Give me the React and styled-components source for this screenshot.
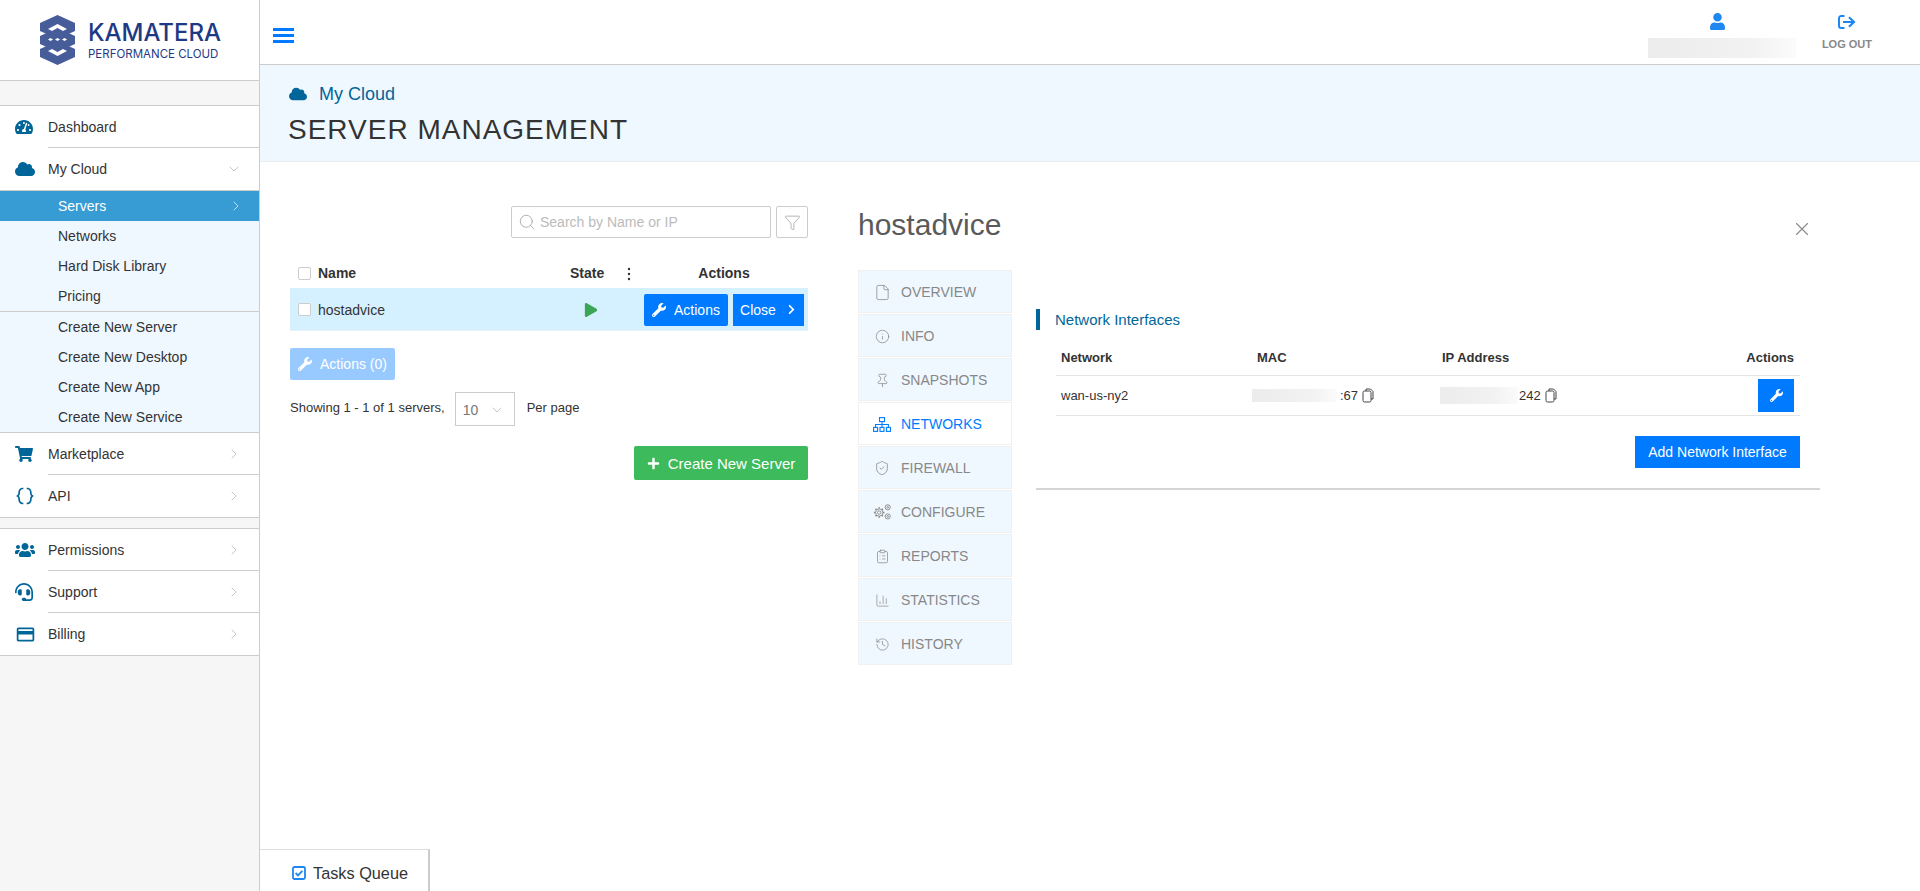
import React from 'react'
import styled, { createGlobalStyle } from 'styled-components'
import {
  FaTachometerAlt,
  FaCloud,
  FaShoppingCart,
  FaUsers,
  FaHeadset,
  FaWrench,
  FaPlay,
  FaPlus,
  FaUser,
  FaChevronRight,
} from 'react-icons/fa'
import { MdPayment } from 'react-icons/md'
import { BiCodeCurly } from 'react-icons/bi'
import {
  ChevronDown,
  ChevronRight,
  Search,
  Funnel,
  X,
  File,
  Info,
  Pin,
  ShieldCheck,
  ClipboardList,
  ChartColumn,
  History,
} from 'lucide-react'

const GlobalStyle = createGlobalStyle`
  html, body {
    margin: 0;
    height: 100%;
    overflow: hidden;
    background: #fff;
  }
  body {
    font-family: "Liberation Sans", Arial, sans-serif;
    font-size: 14px;
    color: #333;
  }
  #root { height: 100%; }
  * { box-sizing: border-box; }
`

const Page = styled.div`
  display: flex;
  height: 891px;
  position: relative;
`

const Sidebar = styled.aside`
  width: 260px;
  flex: none;
  background: #f6f6f6;
  border-right: 1px solid #ccc;
`

const LogoBox = styled.div`
  height: 81px;
  background: #fff;
  border-bottom: 1px solid #ccc;
  display: flex;
  align-items: center;
  gap: 13px;
  padding: 0 0 1px 40px;
`

const LogoText = styled.div`
  color: #1f3a85;
  display: flex;
  flex-direction: column;
`

const LogoName = styled.span`
  font-family: Inter, sans-serif;
  font-size: 24px;
  font-weight: 500;
  line-height: 29px;
`

const LogoTag = styled.span`
  font-family: Inter, sans-serif;
  font-size: 11.5px;
  line-height: 14px;
  white-space: nowrap;
`

const SideGap = styled.div`
  height: ${props => props.$size}px;
`

const MenuGroup = styled.nav`
  background: #fff;
  border-top: 1px solid #ccc;
  border-bottom: 1px solid #ccc;
`

const MenuRow = styled.div`
  height: 42px;
  display: flex;
`

const MenuIcon = styled.span`
  width: 48px;
  flex: none;
  padding-left: 15px;
  display: flex;
  align-items: center;
  color: #006699;
  font-size: 18px;
`

const MenuLabel = styled.span`
  flex: 1;
  display: flex;
  align-items: center;
  justify-content: space-between;
  padding-right: 17px;
  border-bottom: ${props => (props.$last ? 'none' : '1px solid #ccc')};
  color: #333;
`

const SubMenu = styled.div`
  background: #f0f8ff;
  border-top: 1px solid #ccc;
  border-bottom: ${props => (props.$closed ? '1px solid #ccc' : 'none')};
`

const SubItem = styled.div`
  height: 30px;
  padding: 0 15px 0 58px;
  display: flex;
  align-items: center;
  justify-content: space-between;
  background: ${props => (props.$active ? '#379bd4' : 'transparent')};
  color: ${props => (props.$active ? '#fff' : '#333')};
`

const Main = styled.main`
  flex: 1;
  min-width: 0;
  display: flex;
  flex-direction: column;
`

const TopBar = styled.header`
  height: 65px;
  flex: none;
  border-bottom: 1px solid #ccc;
  display: flex;
  align-items: flex-start;
  justify-content: space-between;
  padding: 13px 48px 0 13px;
`

const Burger = styled.span`
  display: flex;
  flex-direction: column;
  gap: 3px;
  margin-top: 15px;
  width: 21px;
`

const BurgerBar = styled.span`
  display: block;
  height: 3px;
  background: #007bff;
`

const TopActions = styled.div`
  display: flex;
  align-items: flex-start;
  gap: 26px;
`

const UserBox = styled.div`
  width: 148px;
  display: flex;
  flex-direction: column;
  align-items: center;
  gap: 8px;
  color: #1e87f0;

  svg {
    margin-right: 8px;
  }
`

const Redacted = styled.span`
  display: block;
  flex: none;
  width: ${props => props.$w}px;
  height: ${props => props.$h}px;
  background: linear-gradient(90deg, #ececec, #f2f2f2 70%, #fbfbfb);
`

const LogoutBox = styled.div`
  display: flex;
  flex-direction: column;
  align-items: center;
  gap: 9px;
  padding-top: 2px;
  color: #1e87f0;
`

const LogoutText = styled.span`
  font-size: 11px;
  font-weight: 700;
  color: #888;
`

const Heading = styled.section`
  height: 97px;
  flex: none;
  background: #f0f8ff;
  border-bottom: 1px solid #eee;
  padding: 19px 0 0 28px;
`

const Crumb = styled.div`
  display: flex;
  align-items: center;
  gap: 12px;
  padding-left: 1px;
  color: #006699;
  font-size: 18px;
  line-height: 20px;
`

const PageTitle = styled.h1`
  margin: 9px 0 0;
  font-size: 28px;
  line-height: 34px;
  font-weight: 400;
  letter-spacing: 1px;
  color: #333;
`

const Content = styled.div`
  flex: 1;
  display: flex;
  gap: 50px;
  padding-left: 30px;
`

const ListPanel = styled.section`
  width: 518px;
  flex: none;
  padding-top: 44px;
`

const SearchRow = styled.div`
  display: flex;
  justify-content: flex-end;
  gap: 5px;
`

const SearchBox = styled.div`
  width: 260px;
  height: 32px;
  border: 1px solid #ccc;
  border-radius: 2px;
  display: flex;
  align-items: center;
  gap: 4px;
  padding-left: 6px;
  color: #bbb;
`

const FilterButton = styled.div`
  width: 32px;
  height: 32px;
  border: 1px solid #ccc;
  border-radius: 2px;
  display: flex;
  align-items: center;
  justify-content: center;
  color: #999;
`

const ServerGrid = styled.div`
  display: grid;
  grid-template-columns: 20px 252px 54px 20px 160px;
  padding-left: 8px;
  height: ${props => props.$h}px;
  background: ${props => props.$bg || 'transparent'};
  border-bottom: ${props => (props.$bg ? '1px solid #e6f0f5' : 'none')};
  align-items: ${props => (props.$bg ? 'center' : 'end')};
  padding-top: ${props => (props.$bg ? 1 : 0)}px;
  padding-bottom: ${props => (props.$bg ? 0 : 7)}px;
`

const CheckBox = styled.span`
  display: block;
  width: 13px;
  height: 13px;
  margin-bottom: ${props => (props.$head ? 1 : 0)}px;
  border: 1px solid #ccc;
  border-radius: 2px;
  background: #fff;
`

const HeadCell = styled.span`
  font-weight: 700;
  color: #333;
  text-align: ${props => props.$align || 'left'};
`

const Dots = styled.span`
  display: flex;
  padding-left: 3px;
  color: #333;
`

const PlayCell = styled.span`
  display: flex;
  padding-left: 14px;
  color: #3aa655;
`

const ActionCell = styled.div`
  display: flex;
  gap: 5px;
`

const BlueButton = styled.button`
  height: 32px;
  width: ${props => props.$w}px;
  border: none;
  border-radius: ${props => props.$r || 0}px;
  background: ${props => (props.$off ? '#99caff' : '#007bff')};
  color: #fff;
  font: inherit;
  display: flex;
  align-items: center;
  justify-content: center;
  gap: ${props => props.$gap || 8}px;
  padding: 0;
`

const BulkRow = styled.div`
  margin-top: 17px;
`

const Pager = styled.div`
  display: flex;
  align-items: flex-start;
  margin-top: 12px;
  font-size: 13px;
`

const PagerText = styled.span`
  line-height: 32px;
`

const PageSelect = styled.div`
  width: 60px;
  height: 34px;
  margin: 0 12px 0 10px;
  border: 1px solid #ccc;
  display: flex;
  align-items: center;
  justify-content: space-between;
  padding: 2px 9px 0 7px;
  font-size: 14px;
  color: #777;
`

const CreateRow = styled.div`
  display: flex;
  justify-content: flex-end;
  margin-top: 20px;
`

const CreateButton = styled.button`
  width: 174px;
  height: 34px;
  border: none;
  border-radius: 2px;
  background: #3cba5c;
  color: #fff;
  font: inherit;
  font-size: 15px;
  display: flex;
  align-items: center;
  justify-content: center;
  gap: 8px;
  padding: 0;
`

const DetailPanel = styled.section`
  flex: 1;
  min-width: 0;
  padding: 45px 100px 0 0;
`

const DetailHead = styled.div`
  display: flex;
  align-items: center;
  justify-content: space-between;
  height: 36px;
  padding-right: 7px;
  color: #888;

  svg {
    margin-top: 7px;
  }
`

const ServerName = styled.h2`
  margin: 0;
  font-size: 30px;
  line-height: 36px;
  font-weight: 400;
  color: #5a5a5a;
`

const DetailBody = styled.div`
  display: flex;
  gap: 24px;
  margin-top: 27px;
`

const Tabs = styled.div`
  width: 154px;
  flex: none;
  display: flex;
  flex-direction: column;
  gap: 1px;
`

const Tab = styled.div`
  height: 43px;
  display: flex;
  align-items: center;
  gap: 10px;
  padding: 1px 0 0 14px;
  background: ${props => (props.$active ? '#fff' : '#f0f8ff')};
  border: 1px solid #f0f0f0;
  color: ${props => (props.$active ? '#007bff' : '#888')};
`

const TabIcon = styled.span`
  width: 18px;
  display: flex;
  justify-content: center;
  flex: none;
`

const NetSection = styled.div`
  flex: 1;
  min-width: 0;
  padding-top: 39px;
`

const SectionTitle = styled.div`
  height: 21px;
  border-left: 4px solid #006699;
  padding-left: 15px;
  font-size: 15px;
  line-height: 21px;
  color: #006699;
`

const NetWrap = styled.div`
  margin: 0 20px;
  font-size: 13px;
`

const NetRow = styled.div`
  display: grid;
  grid-template-columns: 196px 185px 1fr auto;
  padding: 0 6px 0 5px;
  height: ${props => props.$h}px;
  align-items: ${props => (props.$head ? 'end' : 'center')};
  border-bottom: 1px solid #e5e5e5;
`

const NetHead = styled.span`
  font-weight: 700;
  padding-bottom: 10px;
`

const Value = styled.span`
  display: flex;
  align-items: center;
  margin-left: ${props => props.$shift}px;
  gap: ${props => props.$gap}px;
  color: #333;

  svg {
    margin-left: ${props => 4 - props.$gap}px;
  }
`

const WrenchButton = styled.button`
  width: 36px;
  height: 33px;
  border: none;
  background: #007bff;
  color: #fff;
  display: flex;
  align-items: center;
  justify-content: center;
  padding: 0;
`

const AddRow = styled.div`
  display: flex;
  justify-content: flex-end;
  margin: 20px 20px 20px 0;
`

const Rule = styled.hr`
  margin: 0;
  border: none;
  border-top: 2px solid #d5d5d5;
`

const TasksTab = styled.div`
  position: absolute;
  left: 260px;
  bottom: 0;
  width: 170px;
  height: 42px;
  background: #fff;
  border-top: 1px solid #ddd;
  border-right: 2px solid #ccc;
  display: flex;
  align-items: center;
  gap: 7px;
  padding: 5px 0 0 32px;
  font-size: 16.3px;
  color: #333;
`

const KamateraMark = () => (
  <svg width="35" height="50" viewBox="0 0 35 50">
    <g fill="#1f3a85" opacity="0.82">
      <polygon points="17.5,0 35,8 35,16 17.5,24 0,16 0,8" />
      <polygon points="17.5,13 35,21 35,29 17.5,37 0,29 0,21" />
      <polygon points="17.5,26 35,34 35,42 17.5,50 0,42 0,34" />
    </g>
    <g fill="#fff">
      <polygon points="8,14 17.5,9 27,14 23,16 17.5,13 12,16" />
      <polygon points="8,24.5 10.5,23 13,24.5 10.5,26" />
      <polygon points="15,24.5 17.5,23 20,24.5 17.5,26" />
      <polygon points="22,24.5 24.5,23 27,24.5 24.5,26" />
      <polygon points="8,36 12,34 17.5,37 23,34 27,36 17.5,41" />
    </g>
  </svg>
)

const LogoutIcon = () => (
  <svg width="18" height="14" viewBox="0 0 18 14" fill="none" stroke="currentColor" strokeWidth="2">
    <path d="M6.5 1H3.2A2.2 2.2 0 0 0 1 3.2v7.6A2.2 2.2 0 0 0 3.2 13h3.3" />
    <path d="M5 7h10.5" />
    <path d="M11 2.2 16 7l-5 4.8" strokeWidth="2.2" />
  </svg>
)

const NetworkIcon = () => (
  <svg width="18" height="15" viewBox="0 0 18 15" fill="none" stroke="currentColor" strokeWidth="1.1">
    <rect x="6.5" y="0.6" width="5" height="4" />
    <rect x="0.6" y="10.4" width="4" height="4" />
    <rect x="7" y="10.4" width="4" height="4" />
    <rect x="13.4" y="10.4" width="4" height="4" />
    <path d="M9 4.6v5.8M2.6 10.4V7.5h12.8v2.9" />
  </svg>
)

const GearsIcon = () => (
  <svg width="18" height="16" viewBox="0 0 18 16" fill="none" stroke="currentColor" strokeWidth="0.9">
    <circle cx="6.2" cy="8.5" r="1.7" />
    <circle cx="6.2" cy="8.5" r="3.7" />
    <path
      d="M6.2 3.2v1.6M6.2 12.2v1.6M0.9 8.5h1.6M9.9 8.5h1.6M2.5 4.8l1.1 1.1M8.8 11.1l1.1 1.1M2.5 12.2l1.1-1.1M8.8 5.9l1.1-1.1"
      strokeWidth="1.5"
    />
    <circle cx="14.7" cy="3.3" r="2.6" />
    <circle cx="14.7" cy="3.3" r="0.9" />
    <circle cx="14.7" cy="12.4" r="2.6" />
    <circle cx="14.7" cy="12.4" r="0.9" />
  </svg>
)

const CopyIcon = () => (
  <svg width="12" height="15" viewBox="0 0 12 15" fill="none" stroke="#444" strokeWidth="1">
    <path d="M4 3V1h4.5L11 3.5V11H9" />
    <rect x="1" y="3" width="8" height="11" rx="1.5" />
  </svg>
)

const DotsIcon = () => (
  <svg width="4" height="14" viewBox="0 0 4 14" fill="currentColor">
    <circle cx="2" cy="2" r="1.2" />
    <circle cx="2" cy="7" r="1.2" />
    <circle cx="2" cy="12" r="1.2" />
  </svg>
)

const TasksIcon = () => (
  <svg width="14" height="14" viewBox="0 0 14 14" fill="none" stroke="#1e87f0">
    <rect x="1" y="1" width="12" height="12" rx="1.5" strokeWidth="1.8" />
    <path d="M3.6 7l2.4 2.4 4.4-4.6" strokeWidth="1.8" />
  </svg>
)

const sideChevron = <ChevronRight size={16} strokeWidth={1} color="#aaa" />

const tabs = [
  { name: 'OVERVIEW', icon: <File size={17} strokeWidth={1.1} /> },
  { name: 'INFO', icon: <Info size={15} strokeWidth={1.2} /> },
  { name: 'SNAPSHOTS', icon: <Pin size={15} strokeWidth={1.2} /> },
  { name: 'NETWORKS', icon: <NetworkIcon />, active: true },
  { name: 'FIREWALL', icon: <ShieldCheck size={16} strokeWidth={1.2} /> },
  { name: 'CONFIGURE', icon: <GearsIcon /> },
  { name: 'REPORTS', icon: <ClipboardList size={15} strokeWidth={1.2} /> },
  { name: 'STATISTICS', icon: <ChartColumn size={15} strokeWidth={1.1} /> },
  { name: 'HISTORY', icon: <History size={15} strokeWidth={1.2} /> },
]

const subTop = ['Networks', 'Hard Disk Library', 'Pricing']
const subBottom = ['Create New Server', 'Create New Desktop', 'Create New App', 'Create New Service']

export default function App() {
  return (
    <Page>
      <GlobalStyle />
      <Sidebar>
        <LogoBox>
          <KamateraMark />
          <LogoText>
            <LogoName>KAMATERA</LogoName>
            <LogoTag>PERFORMANCE CLOUD</LogoTag>
          </LogoText>
        </LogoBox>
        <SideGap $size={24} />
        <MenuGroup>
          <MenuRow>
            <MenuIcon><FaTachometerAlt /></MenuIcon>
            <MenuLabel>Dashboard</MenuLabel>
          </MenuRow>
          <MenuRow>
            <MenuIcon><FaCloud size={20} /></MenuIcon>
            <MenuLabel $last>
              My Cloud
              <ChevronDown size={16} strokeWidth={1} color="#aaa" />
            </MenuLabel>
          </MenuRow>
          <SubMenu>
            <SubItem $active>
              Servers
              <ChevronRight size={16} strokeWidth={1} color="#fff" />
            </SubItem>
            {subTop.map(item => (
              <SubItem key={item}>{item}</SubItem>
            ))}
          </SubMenu>
          <SubMenu $closed>
            {subBottom.map(item => (
              <SubItem key={item}>{item}</SubItem>
            ))}
          </SubMenu>
          <MenuRow>
            <MenuIcon><FaShoppingCart /></MenuIcon>
            <MenuLabel>Marketplace{sideChevron}</MenuLabel>
          </MenuRow>
          <MenuRow>
            <MenuIcon><BiCodeCurly size={20} /></MenuIcon>
            <MenuLabel $last>API{sideChevron}</MenuLabel>
          </MenuRow>
        </MenuGroup>
        <SideGap $size={10} />
        <MenuGroup>
          <MenuRow>
            <MenuIcon><FaUsers size={20} /></MenuIcon>
            <MenuLabel>Permissions{sideChevron}</MenuLabel>
          </MenuRow>
          <MenuRow>
            <MenuIcon><FaHeadset /></MenuIcon>
            <MenuLabel>Support{sideChevron}</MenuLabel>
          </MenuRow>
          <MenuRow>
            <MenuIcon><MdPayment size={21} /></MenuIcon>
            <MenuLabel $last>Billing{sideChevron}</MenuLabel>
          </MenuRow>
        </MenuGroup>
      </Sidebar>

      <Main>
        <TopBar>
          <Burger>
            <BurgerBar />
            <BurgerBar />
            <BurgerBar />
          </Burger>
          <TopActions>
            <UserBox>
              <FaUser size={17} />
              <Redacted $w={148} $h={20} />
            </UserBox>
            <LogoutBox>
              <LogoutIcon />
              <LogoutText>LOG OUT</LogoutText>
            </LogoutBox>
          </TopActions>
        </TopBar>

        <Heading>
          <Crumb>
            <FaCloud size={18} />
            My Cloud
          </Crumb>
          <PageTitle>SERVER MANAGEMENT</PageTitle>
        </Heading>

        <Content>
          <ListPanel>
            <SearchRow>
              <SearchBox>
                <Search size={18} strokeWidth={1} color="#999" />
                Search by Name or IP
              </SearchBox>
              <FilterButton>
                <Funnel size={17} strokeWidth={1} />
              </FilterButton>
            </SearchRow>

            <ServerGrid $h={50}>
              <CheckBox $head />
              <HeadCell>Name</HeadCell>
              <HeadCell>State</HeadCell>
              <Dots><DotsIcon /></Dots>
              <HeadCell $align="center">Actions</HeadCell>
            </ServerGrid>
            <ServerGrid $h={43} $bg="#d5f0fe">
              <CheckBox />
              <span>hostadvice</span>
              <PlayCell><FaPlay size={14} /></PlayCell>
              <span />
              <ActionCell>
                <BlueButton $w={84} $r={2}>
                  <FaWrench size={14} />
                  Actions
                </BlueButton>
                <BlueButton $w={71} $gap={10}>
                  Close
                  <FaChevronRight size={11} />
                </BlueButton>
              </ActionCell>
            </ServerGrid>

            <BulkRow>
              <BlueButton $w={105} $r={2} $off>
                <FaWrench size={14} />
                Actions (0)
              </BlueButton>
            </BulkRow>

            <Pager>
              <PagerText>Showing 1 - 1 of 1 servers,</PagerText>
              <PageSelect>
                10
                <ChevronDown size={16} strokeWidth={1} color="#aaa" />
              </PageSelect>
              <PagerText>Per page</PagerText>
            </Pager>

            <CreateRow>
              <CreateButton>
                <FaPlus size={13} />
                Create New Server
              </CreateButton>
            </CreateRow>
          </ListPanel>

          <DetailPanel>
            <DetailHead>
              <ServerName>hostadvice</ServerName>
              <X size={22} strokeWidth={1.2} />
            </DetailHead>
            <DetailBody>
              <Tabs>
                {tabs.map(tab => (
                  <Tab key={tab.name} $active={tab.active}>
                    <TabIcon>{tab.icon}</TabIcon>
                    {tab.name}
                  </Tab>
                ))}
              </Tabs>
              <NetSection>
                <SectionTitle>Network Interfaces</SectionTitle>
                <NetWrap>
                  <NetRow $h={46} $head>
                    <NetHead>Network</NetHead>
                    <NetHead>MAC</NetHead>
                    <NetHead>IP Address</NetHead>
                    <NetHead>Actions</NetHead>
                  </NetRow>
                  <NetRow $h={40}>
                    <span>wan-us-ny2</span>
                    <Value $shift={-5} $gap={3}>
                      <Redacted $w={85} $h={13} />
                      :67
                      <CopyIcon />
                    </Value>
                    <Value $shift={-2} $gap={1}>
                      <Redacted $w={78} $h={17} />
                      242
                      <CopyIcon />
                    </Value>
                    <WrenchButton><FaWrench size={13} /></WrenchButton>
                  </NetRow>
                </NetWrap>
                <AddRow>
                  <BlueButton $w={165}>Add Network Interface</BlueButton>
                </AddRow>
                <Rule />
              </NetSection>
            </DetailBody>
          </DetailPanel>
        </Content>
      </Main>

      <TasksTab>
        <TasksIcon />
        Tasks Queue
      </TasksTab>
    </Page>
  )
}
